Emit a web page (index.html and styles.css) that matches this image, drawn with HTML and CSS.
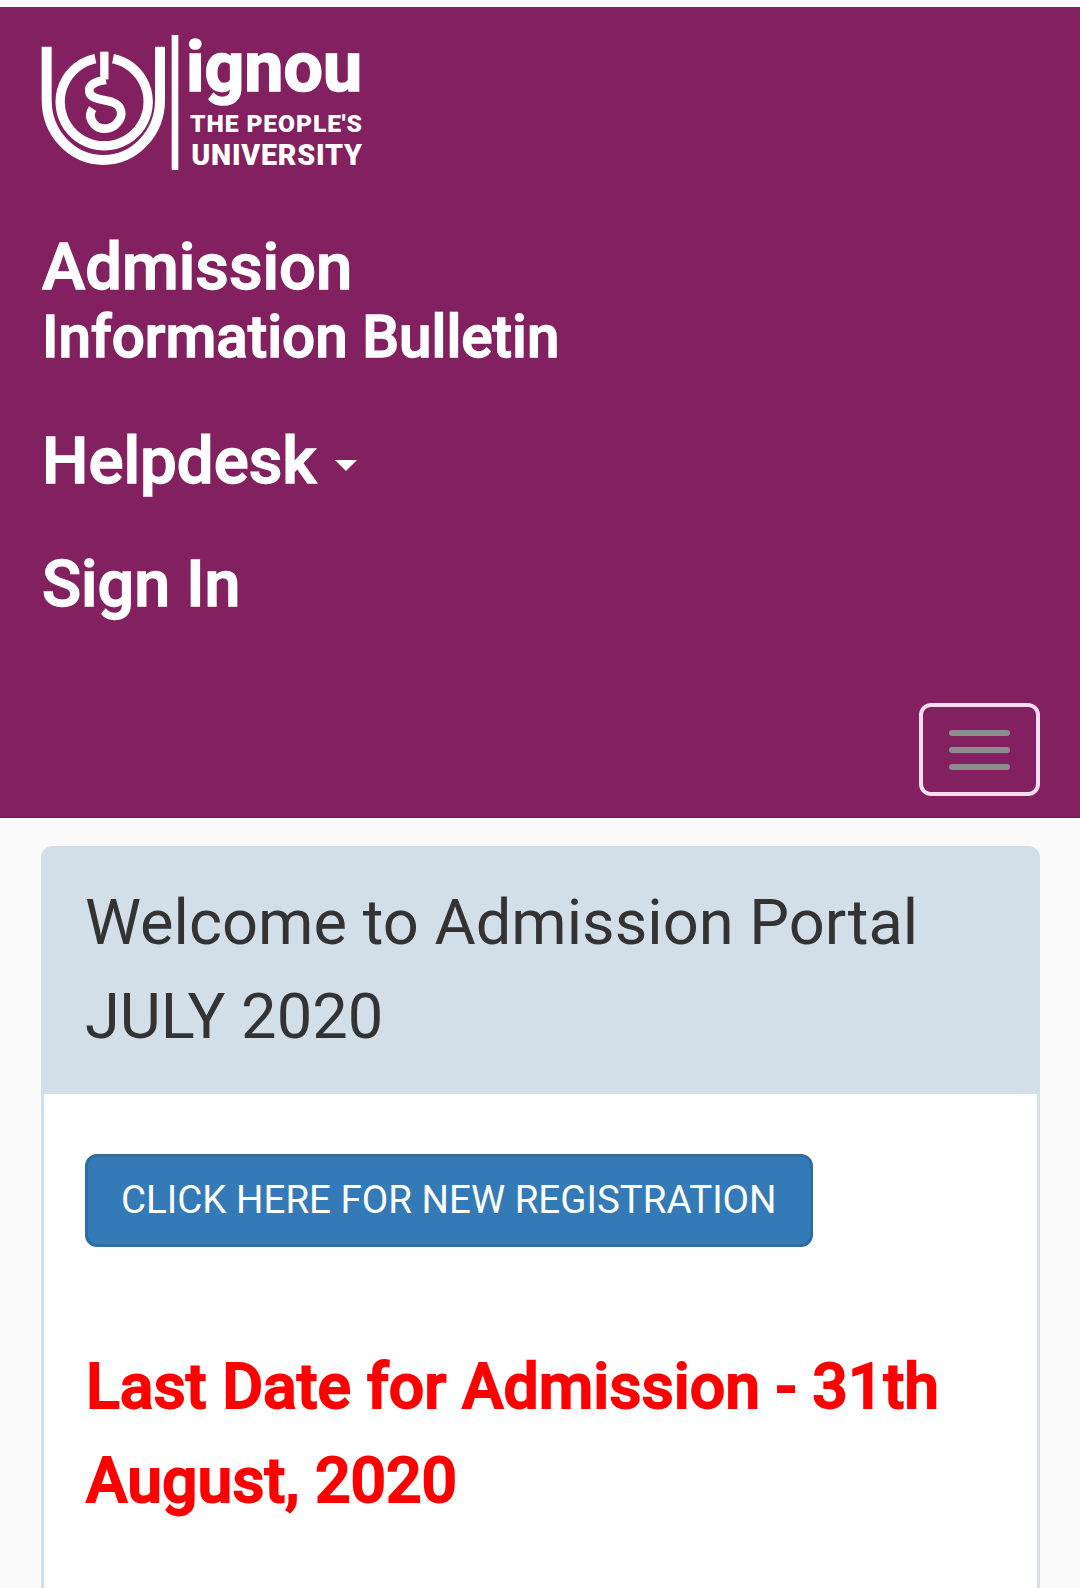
FILE: index.html
```html
<!DOCTYPE html>
<html lang="en">
<head>
<meta charset="utf-8">
<title>IGNOU Admission Portal</title>
<link rel="stylesheet" href="styles.css">
</head>
<body>
<header class="navbar">
  <a class="brand" href="#" aria-label="IGNOU, The People's University">
    <svg class="logo" viewBox="60 60 990 465" width="330" height="155">
      <g fill="none" stroke="#fff">
        <path d="M80 140V300A170 180 0 0 0 420 300V140" stroke-width="30"/>
        <path d="M226 176A132 132 0 1 0 279 176" stroke-width="28"/>
        <path d="M253 155V238" stroke-width="25"/>
        <path d="M258 240C222 244 204 258 208 276C212 298 250 298 276 306C306 316 312 346 292 368C274 390 240 392 222 372C210 358 206 344 218 326" stroke-width="26"/>
      </g>
      <rect x="455" y="105" width="20" height="405" fill="#fff"/>
      <text class="logo-name" x="498" y="272" textLength="528" lengthAdjust="spacingAndGlyphs">ignou</text>
      <text class="logo-line" x="510" y="396" textLength="516" lengthAdjust="spacing">THE PEOPLE'S</text>
      <text class="logo-line logo-big" x="514" y="496" textLength="512" lengthAdjust="spacing">UNIVERSITY</text>
    </svg>
  </a>
  <nav class="menu">
    <a class="menu-item menu-bulletin" href="#"><span class="menu-first">Admission</span><span class="menu-second">Information Bulletin</span></a>
    <a class="menu-item menu-help" href="#">Helpdesk<span class="caret"></span></a>
    <a class="menu-item menu-sign" href="#">Sign In</a>
  </nav>
  <div class="toggle-row">
    <button class="toggle" type="button" aria-label="Toggle navigation">
      <span class="bar"></span><span class="bar"></span><span class="bar"></span>
    </button>
  </div>
</header>
<main class="content">
  <section class="panel">
    <h2 class="panel-heading">Welcome to Admission Portal JULY 2020</h2>
    <div class="panel-body">
      <a class="btn" href="#">CLICK HERE FOR NEW REGISTRATION</a>
      <h2 class="notice">Last Date for Admission - 31th August, 2020</h2>
    </div>
  </section>
</main>
</body>
</html>
```
FILE: styles.css
```css
* { box-sizing: border-box; }
html, body { margin: 0; height: 1588px; overflow: hidden; }
body {
  padding-top: 7px;
  background: #fafafa;
  font-family: Roboto, "Liberation Sans", sans-serif;
  color: #333;
}
.navbar {
  height: 811px;
  background: #83205f;
  border-bottom: 1px solid #6d1a4f;
  box-shadow: 0 5px 0 #fff;
  padding: 13px 40px 0;
  display: flex;
  flex-direction: column;
}
.brand { display: block; height: 155px; }
.logo { display: block; }
.logo-name { font: 700 212px Roboto, sans-serif; fill: #fff; stroke: #fff; stroke-width: 5px; }
.logo-line { font: 900 74px Roboto, sans-serif; fill: #fff; }
.logo-big { font-size: 86px; }
.menu { display: flex; flex-direction: column; padding-left: 2px; }
.menu-item {
  color: #fff;
  text-decoration: none;
  font-weight: 500;
  display: block;
  -webkit-text-stroke: 1.4px #fff;
}
.menu-bulletin { margin-top: 56px; }
.menu-first { display: block; font-size: 65.2px; line-height: 73px; }
.menu-second { display: block; font-size: 58.4px; line-height: 66px; }
.menu-help { margin-top: 53px; font-size: 65.4px; line-height: 76px; }
.menu-sign { margin-top: 47px; font-size: 64.6px; line-height: 76px; }
.caret {
  display: inline-block;
  margin-left: 19px;
  vertical-align: 12px;
  border-top: 11px solid #fff;
  border-left: 11px solid transparent;
  border-right: 11px solid transparent;
  -webkit-text-stroke: 0;
}
.toggle-row { margin-top: auto; display: flex; justify-content: flex-end; padding-bottom: 21px; }
.toggle {
  width: 121px;
  height: 93px;
  background: transparent;
  border: 4px solid #f8dcef;
  border-radius: 12px;
  display: flex;
  flex-direction: column;
  align-items: center;
  justify-content: center;
  gap: 11px;
  padding: 0;
}
.bar { display: block; width: 61px; height: 6px; border-radius: 3px; background: #8d8d8d; }
.content { padding: 28px 40px 0 41px; }
.panel {
  border: 3px solid #d3dfe8;
  border-top: 0;
  border-radius: 12px 12px 0 0;
  background: #fff;
  height: 1000px;
}
.panel-heading {
  margin: 0 -3px;
  padding: 29px 44px 31px;
  background: #d3dfe8;
  border-radius: 12px 12px 0 0;
  font-size: 63.2px;
  font-weight: 400;
  line-height: 94px;
  color: #333;
}
.panel-body { padding: 60px 41px; }
.btn {
  display: inline-block;
  height: 93px;
  padding: 0 33px;
  background: #337ab7;
  border: 3px solid #2e6da4;
  border-radius: 12px;
  color: #fff;
  text-decoration: none;
  font-size: 38.5px;
  line-height: 85px;
}
.notice {
  margin: 93px 0 0 1px;
  color: #f00;
  font-size: 62.6px;
  font-weight: 500;
  line-height: 94px;
  -webkit-text-stroke: 1.8px #f00;
}
```
